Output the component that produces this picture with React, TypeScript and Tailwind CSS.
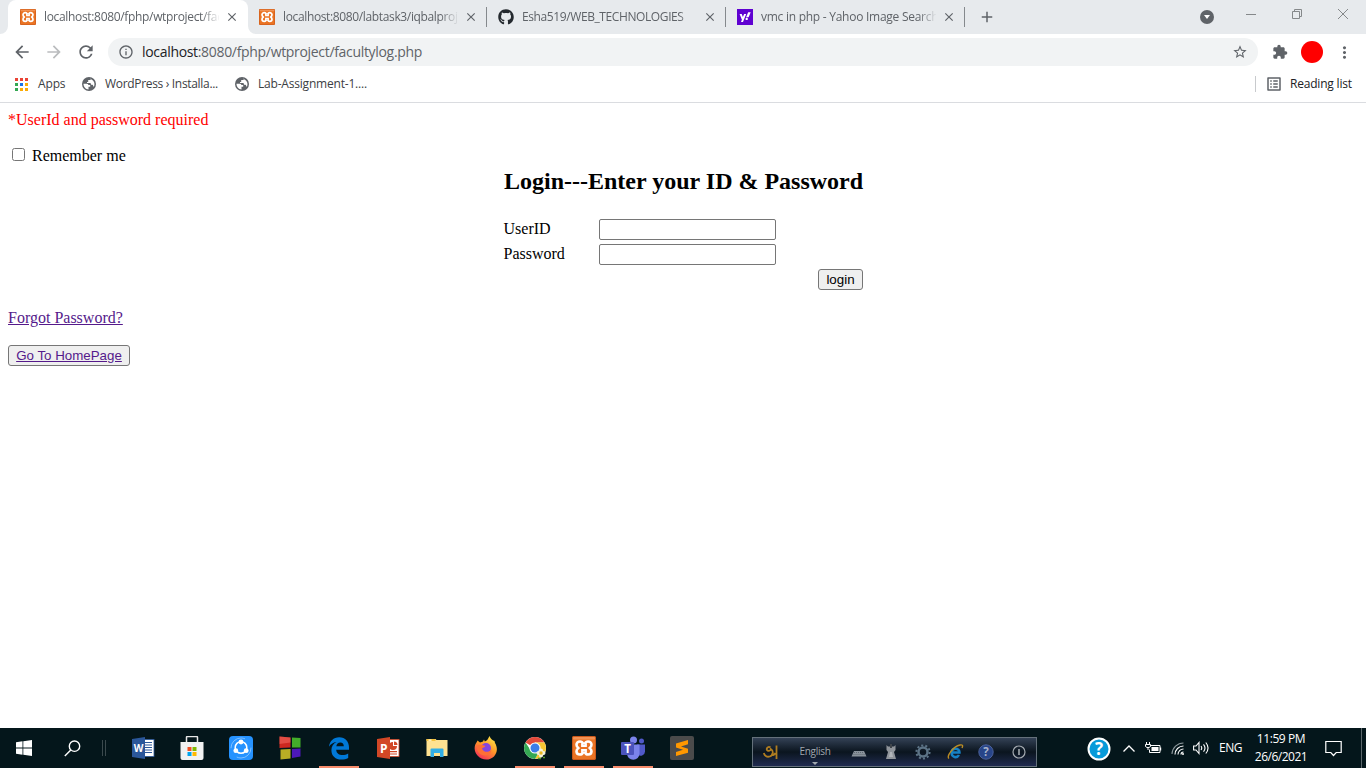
import React from "react";
import {
  MdAdd,
  MdArrowBack,
  MdArrowForward,
  MdClose,
  MdExtension,
  MdInfoOutline,
  MdListAlt,
  MdMoreVert,
  MdRefresh,
  MdStarBorder,
} from "react-icons/md";
import { FaGithub } from "react-icons/fa";

function XamppIcon({ className }: { className: string }) {
  return (
    <svg viewBox="0 0 24 24" className={className}>
      <rect width="24" height="24" rx="2" fill="#ea7424" />
      <rect x="0.5" y="0.5" width="23" height="23" rx="1.500" fill="none" stroke="#c9581a" />
      <rect x="1" y="1" width="22" height="2.500" rx="1" fill="#f3a06a" opacity="0.700" />
      <path
        d="M8 5.500c-2.200 0-3.500 1.300-3.500 3.200 0 1.500.8 2.600 2 3.300-1.200.7-2 1.800-2 3.300 0 1.900 1.300 3.200 3.500 3.200 1.500 0 2.400-.8 2.800-2h2.400c.4 1.200 1.300 2 2.800 2 2.200 0 3.500-1.300 3.500-3.200 0-1.500-.8-2.600-2-3.300 1.200-.7 2-1.800 2-3.300 0-1.900-1.300-3.200-3.500-3.200-1.500 0-2.400.8-2.800 2h-2.400c-.4-1.200-1.300-2-2.800-2z"
        fill="none"
        stroke="#fff"
        strokeWidth="2.600"
        strokeLinejoin="round"
      />
      <path d="M10 7.500v2.500h4V7.500M10 16.500v-2.500h4v2.500" fill="none" stroke="#fff" strokeWidth="1.800" />
    </svg>
  );
}

function YahooIcon() {
  return (
    <svg viewBox="0 0 16 16" className="size-4 shrink-0">
      <rect width="16" height="16" fill="#5f01d1" />
      <path d="M2.600 5h2.100l1.200 3L7.100 5h2.100L6 12.900H4l.9-2.200z" fill="#fff" />
      <path d="M11.200 3.300h2.500l-2.100 5H9.100z" fill="#fff" />
      <circle cx="9.700" cy="9.900" r="1.200" fill="#fff" />
    </svg>
  );
}

function GlobeIcon() {
  return (
    <svg viewBox="0 0 14 14" className="size-3.5 shrink-0">
      <circle cx="7" cy="7" r="7" fill="#5f6368" />
      <path d="M1.500 6.800h3.200q1.500 0 1.800 1.300h1.700v1.700H6.500v2.700C3.800 12.300 1.500 10 1.500 6.800z" fill="#fff" />
      <path d="M8.800 1.800 8.500 3H6.200v2H5v1h3.200q.8 0 .8 1.800h1.400q.8 0 .9 1.700h.7c1.400-3.300-.4-6.600-4.200-7.700z" fill="#fff" />
    </svg>
  );
}

function Tab({
  icon,
  title,
  active,
  tracking,
}: {
  icon: React.ReactNode;
  title: string;
  active?: boolean;
  tracking: string;
}) {
  return (
    <div
      className={
        "relative flex h-[34px] shrink-0 items-center pl-3 " +
        (active ? "mr-[-1px] w-[240px] rounded-t-lg bg-white" : "w-[239px]")
      }
    >
      {icon}
      <span
        className={
          "ml-2 w-[175px] overflow-hidden whitespace-nowrap text-xs text-[#5f6368] [mask-image:linear-gradient(to_right,#000_157px,transparent_176px)] " +
          tracking
        }
      >
        {title}
      </span>
      <MdClose className="ml-[6px] size-3.5 text-[#5f6368]" />
      {active ? (
        <>
          <svg viewBox="0 0 8 8" className="absolute bottom-0 -left-2 size-2">
            <path d="M8 0v8H0a8 8 0 0 0 8-8z" fill="#fff" />
          </svg>
          <svg viewBox="0 0 8 8" className="absolute -right-2 bottom-0 size-2">
            <path d="M0 0v8h8a8 8 0 0 1-8-8z" fill="#fff" />
          </svg>
        </>
      ) : (
        <span className="absolute right-[-1px] top-[7px] h-5 w-px bg-[#85898d]" />
      )}
    </div>
  );
}

function AppsIcon() {
  const colors = ["#ea4335", "#ea4335", "#ea4335", "#34a853", "#1a73e8", "#fbab05", "#34a853", "#fbab05", "#fbab05"];
  return (
    <svg viewBox="0 0 13 13" className="size-[13px]">
      {colors.map((c, i) => (
        <rect key={i} x={(i % 3) * 5} y={Math.floor(i / 3) * 5} width="3" height="3" fill={c} />
      ))}
    </svg>
  );
}

function TaskCell({ children, running }: { children: React.ReactNode; running?: boolean }) {
  return (
    <div className="relative flex h-10 w-[49px] shrink-0 items-center justify-center">
      {children}
      {running && <span className="absolute bottom-0 left-[5px] h-0.5 w-10 bg-[#f78c6c]" />}
    </div>
  );
}

function Taskbar() {
  return (
    <footer className="flex h-10 shrink-0 bg-[#04161b] font-['Open_Sans',sans-serif] text-white">
      <div className="flex h-10 w-12 items-center justify-center">
        <svg viewBox="0 0 16 16" className="size-4" fill="#fff">
          <path d="M0 2.200 6.500 1.300v6.200H0zM7.300 1.200 16 0v7.500H7.300zM0 8.400h6.500v6.300L0 13.800zM7.300 8.400H16V16l-8.700-1.200z" />
        </svg>
      </div>
      <div className="flex h-10 w-12 items-center justify-center">
        <svg viewBox="0 0 17 17" className="size-[17px]" fill="none" stroke="#fff" strokeWidth="1.400">
          <circle cx="10.500" cy="6.200" r="5.200" />
          <path d="M6.800 10 .8 16" />
        </svg>
      </div>
      <div className="flex h-10 w-[22px] items-center gap-0.5 pl-[6px]">
        <span className="h-4 w-px bg-[#3b494d]" />
        <span className="h-4 w-px bg-[#3b494d]" />
      </div>
      <TaskCell>
        <svg viewBox="0 0 24 24" className="size-6">
          <rect x="11" y="3.500" width="12" height="17" fill="#fff" stroke="#2b579a" strokeWidth="0.800" />
          <path d="M14 6.500h7M14 9h7M14 11.500h7M14 14h7M14 16.500h7" stroke="#2b579a" strokeWidth="1.200" />
          <path d="M1 3 14 1v22L1 21z" fill="#2b579a" />
          <text x="2.800" y="16" fill="#fff" fontFamily="Open Sans, sans-serif" fontWeight="bold" fontSize="10">W</text>
        </svg>
      </TaskCell>
      <TaskCell>
        <svg viewBox="0 0 24 24" className="size-6">
          <path d="M6.500 8V1.500q0-1 1-1h9q1 0 1 1V8" fill="none" stroke="#e7e7e7" strokeWidth="1.500" />
          <path d="M.5 6h23v16q0 2-2 2h-19q-2 0-2-2z" fill="#f2f2f2" />
          <path d="M7.500 11H11.500v4h-4z" fill="#f25022" />
          <path d="M12.500 11h4v4h-4z" fill="#7fba00" />
          <path d="M7.500 16h4v4h-4z" fill="#00a4ef" />
          <path d="M12.500 16h4v4h-4z" fill="#ffb900" />
        </svg>
      </TaskCell>
      <TaskCell>
        <svg viewBox="0 0 24 24" className="size-6">
          <rect width="24" height="24" rx="4" fill="#2693ff" />
          <circle cx="12" cy="12" r="10" fill="none" stroke="#7fc0ff" strokeWidth="1" strokeDasharray="20 11" />
          <circle cx="12" cy="11.500" r="5.800" fill="none" stroke="#fff" strokeWidth="1.500" />
          <g fill="#fff">
            <circle cx="12" cy="6" r="2.400" />
            <circle cx="6.800" cy="14.700" r="2.400" />
            <circle cx="17.200" cy="14.700" r="2.400" />
          </g>
        </svg>
      </TaskCell>
      <TaskCell>
        <svg viewBox="0 0 22 24" className="h-6 w-[22px]">
          <path d="M.5.5 11.500 1.500v10L.5 12z" fill="#cc2820" />
          <path d="M13 1.500l8.500.5v9.500H13z" fill="#43ad2a" />
          <path d="M1.500 13.500 11.500 13v9.500l-10 1z" fill="#b9ae25" />
          <path d="M13 13l8.500-.5v8L13 22z" fill="#4d18b7" />
          <path d="M.5.5 11.500 1.500v5L.5 8z" fill="#f67167" opacity="0.500" />
        </svg>
      </TaskCell>
      <TaskCell running>
        <svg viewBox="0 0 22 24" className="h-6 w-[22px]">
          <path
            d="M1 10.800C1.600 5.300 5.500 1.300 11.200 1.300c6.300 0 9.800 4.800 9.800 9.900v2.600H8.200c.2 3.800 3 5.300 6.200 5.300 2.200 0 4-.5 5.800-1.500v4.500c-1.900 1-4.300 1.500-6.800 1.500-5.900 0-10-3.600-10-9.400 0-3.800 1.900-6.800 5.300-8.200C4.900 6.300 2.300 8.500 1 10.800zM8.300 10.300h7.500c0-2.300-1.200-3.800-3.500-3.800-2.200 0-3.700 1.600-4 3.800z"
            fill="#0078d7"
            fillRule="evenodd"
          />
        </svg>
      </TaskCell>
      <TaskCell>
        <svg viewBox="0 0 24 24" className="size-6">
          <rect x="11" y="3.500" width="12" height="17" fill="#fff" stroke="#d24726" strokeWidth="0.800" />
          <path d="M17 6a4 4 0 1 0 4 4h-4z" fill="#d24726" />
          <path d="M18 5.500V9h3.500A3.500 3.500 0 0 0 18 5.500zM14 15h7v1.200h-7zM14 17.500h7v1h-7z" fill="#d24726" />
          <path d="M1 3 14 1v22L1 21z" fill="#d24726" />
          <text x="4" y="16.500" fill="#fff" fontFamily="Open Sans, sans-serif" fontWeight="bold" fontSize="12">P</text>
        </svg>
      </TaskCell>
      <TaskCell>
        <svg viewBox="0 0 22 20" className="h-5 w-[22px]">
          <path d="M.5 1h9l1 1h11v16H.5z" fill="#ffe291" />
          <path d="M.5 1h9v2h-9z" fill="#f5c23c" />
          <path d="M2.500 1.500h3v1.300h-3z" fill="#fff8df" />
          <path d="M4.500 19v-7.500q0-1 1-1h11q1 0 1 1V19H14v-4H8v4z" fill="#32aee5" />
        </svg>
      </TaskCell>
      <TaskCell>
        <svg viewBox="0 0 24 24" className="size-6">
          <defs>
            <linearGradient id="fox" x1="0.8" y1="0" x2="0.2" y2="1">
              <stop offset="0" stopColor="#ffe94b" />
              <stop offset="0.450" stopColor="#ff9a27" />
              <stop offset="1" stopColor="#f5265b" />
            </linearGradient>
          </defs>
          <path d="M3.500 4.500 6 6.500l3-1 1-2 .8 2C13 5 14 3 15.500 0c1 3 3.500 4.500 5 5l.5 2c3 5 2.200 10-1 13.500-4.500 4.500-12.500 4-16.500-1C.5 16 0 12 1.300 8.500 2 7 3 6 3.500 4.500z" fill="url(#fox)" />
          <circle cx="12" cy="12" r="5" fill="#8446df" />
          <path d="M3 9.500c3-1.500 5.500-.5 8.500.5-1 1.500-3 1.500-3.500 2.500 1.500 4 6.500 4.500 9.500 1-.5 4.500-4 7-9 5.500C4.500 18 2.500 14 3 9.500z" fill="#ff6f35" />
        </svg>
      </TaskCell>
      <TaskCell running>
        <svg viewBox="0 0 24 24" className="size-6">
          <circle cx="12" cy="12" r="11" fill="#fff" />
          <path d="M12 12 2.500 6.500A11 11 0 0 1 21.500 6.500H12z" fill="#e24a3b" />
          <path d="M21.500 6.500A11 11 0 0 1 12 23l5-9-5-7.500z" fill="#f8c632" />
          <path d="M2.500 6.500A11 11 0 0 0 12 23l4.500-8-9-1z" fill="#35a853" />
          <circle cx="12" cy="12" r="5.600" fill="#fff" />
          <circle cx="12" cy="12" r="4.500" fill="#3c7de8" />
          <g fill="#f4f1db">
            <circle cx="18" cy="14.500" r="2" />
            <circle cx="20.500" cy="17" r="2" />
            <circle cx="18" cy="19.500" r="2" />
            <circle cx="15.500" cy="17" r="2" />
          </g>
          <circle cx="18" cy="17" r="1.700" fill="#eab61e" />
          <path d="M15 22.500h3M20 21.500h2" stroke="#569a28" strokeWidth="1.500" />
        </svg>
      </TaskCell>
      <TaskCell running>
        <XamppIcon className="size-6" />
      </TaskCell>
      <TaskCell running>
        <svg viewBox="0 0 24 24" className="size-6">
          <circle cx="12.500" cy="4" r="3.500" fill="#7b83eb" />
          <circle cx="20.500" cy="5" r="2.500" fill="#5059c9" />
          <path d="M16 8.500h8v7a4.500 4.500 0 0 1-7 3.500z" fill="#5059c9" />
          <path d="M6 8.500h12.500v9a6 6 0 0 1-12.500 0z" fill="#7b83eb" />
          <rect x="0" y="6" width="13" height="13" rx="1" fill="#4b53bc" />
          <text x="6.500" y="16.500" textAnchor="middle" fill="#fff" fontFamily="Open Sans, sans-serif" fontWeight="bold" fontSize="11.500">T</text>
        </svg>
      </TaskCell>
      <TaskCell>
        <svg viewBox="0 0 24 24" className="size-6">
          <rect width="24" height="24" rx="2" fill="#4b4b4b" />
          <path d="M6 7.500 18 4v4.200l-7 2.200 7 2.300v4L6 20v-4l7-2.200-7-2.300z" fill="#ff9800" />
        </svg>
      </TaskCell>

      <div className="mt-[9px] ml-[46px] flex h-[30px] w-[285px] shrink-0 items-center border border-[#65717b] bg-linear-to-b from-[#344256] via-[#0b151f] via-50% to-[#202b50]">
        <div className="flex w-[34px] justify-center">
          <svg viewBox="0 0 15 15" className="size-[15px]" fill="none" stroke="#b07d20" strokeWidth="1.800">
            <path d="M7.500 2.500c-2-1.500-4.500.5-3.500 2.500 1 1.800 4 .5 3.800-1 3 1.500 2.500 6.500-1 7.500C3.500 12.500 1.500 10.500.8 8M8 9.500c2 1 3.500.5 4.500-1.500M13.500.5v13.500" />
          </svg>
        </div>
        <div className="relative ml-[9px] flex h-7 w-[38px] items-center justify-center text-[10px] leading-none text-[#a2a9b0]">
          <span className="-mt-[3px] tracking-[-0.3px]">English</span>
          <svg viewBox="0 0 6 3" className="absolute bottom-[1px] h-[3px] w-1.5" fill="#a2a9b0">
            <path d="M0 0h6L3 3z" />
          </svg>
        </div>
        <svg viewBox="0 0 16 8" className="mt-1 ml-[17px] h-2 w-4">
          <path d="M3 1h10l2.500 5.500H.5z" fill="#89919a" />
          <path d="M3 2.500h10M2.500 4.500h11" stroke="#5f6870" strokeDasharray="1 1" />
        </svg>
        <svg viewBox="0 0 12 16" className="ml-[18px] h-4 w-3">
          <path d="M1.500 1l1.500 1.500h6L10.500 1v5L9 8l2 7H1l2-7-1.500-2z" fill="#8f949a" />
          <path d="M5 0h2v4H5z" fill="#3f454b" />
          <path d="M5 8h2l1 5H4z" fill="#b1b5b9" />
        </svg>
        <svg viewBox="0 0 16 16" className="ml-[18px] size-4" fill="none" stroke="#5c7386">
          <circle cx="8" cy="8" r="4.500" strokeWidth="2.500" />
          <circle cx="8" cy="8" r="6.600" strokeWidth="2" strokeDasharray="2.100 2.050" />
        </svg>
        <svg viewBox="0 0 17 16" className="ml-4 h-4 w-[17px]">
          <path d="M4.500 8.500h8c.2-5-7.800-5-8 0 .2 5 5.500 6 7.500 2.500" fill="none" stroke="#1681c4" strokeWidth="2.500" />
          <path d="M2 14.500c-3-2 4-12 11-13.500 3-.5 3 1 2 3" fill="none" stroke="#ba8c24" strokeWidth="1.400" />
        </svg>
        <svg viewBox="0 0 16 16" className="ml-[14px] size-4">
          <circle cx="8" cy="8" r="7.200" fill="#284589" stroke="#4c629c" />
          <text x="8" y="12.200" textAnchor="middle" fontFamily="Open Sans, sans-serif" fontWeight="bold" fontSize="11.500" fill="#a9b3c8">?</text>
        </svg>
        <svg viewBox="0 0 14 14" className="ml-[18px] size-3.5" fill="none" stroke="#a4aab0" strokeWidth="1.200">
          <circle cx="7" cy="7" r="6" />
          <path d="M7 4v6" strokeWidth="1.600" />
        </svg>
      </div>

      <div className="ml-[50px] flex h-10 items-center">
        <svg viewBox="0 0 24 24" className="mt-[2px] size-6">
          <circle cx="12" cy="12" r="10.500" fill="#079ad9" stroke="#fff" strokeWidth="2" />
          <text x="12" y="18" textAnchor="middle" fontFamily="Open Sans, sans-serif" fontWeight="bold" fontSize="17" fill="#fff">?</text>
        </svg>
        <svg viewBox="0 0 12 7" className="ml-[12px] h-[7px] w-3" fill="none" stroke="#fff" strokeWidth="1.300">
          <path d="M.5 6.500 6 1l5.500 5.500" />
        </svg>
        <svg viewBox="0 0 17 13" className="ml-[10px] h-[13px] w-[17px]">
          <path d="M5.500 3.500h9.500v7H4.500v-3" fill="none" stroke="#fff" />
          <path d="M6.500 5h7v4h-7zM15 5.500h1.200v3H15z" fill="#fff" />
          <path d="M1.500 0v2M4.500 0v2M.5 2.500h5v2L4 5.500H2L.5 4.500zM3 5.500V8" fill="none" stroke="#fff" />
        </svg>
        <svg viewBox="0 0 14 14" className="mt-0.5 ml-[9px] size-3.5" fill="none" stroke="#fff" strokeWidth="1.100">
          <path d="M1 12A11.500 11.500 0 0 1 12.500 1" stroke="#8b969a" />
          <path d="M4 12.500A8.500 8.500 0 0 1 12.500 4M7 12.500A5.500 5.500 0 0 1 12.500 7M10 12.500A2.500 2.500 0 0 1 12.500 10" />
          <circle cx="12" cy="12" r="1" fill="#fff" stroke="none" />
        </svg>
        <svg viewBox="0 0 17 14" className="ml-[8px] h-3.5 w-[17px]" fill="none" stroke="#fff" strokeWidth="1.100">
          <path d="M.6 5h2.400L6 1.500v11L3 9H.6zM8 5q1.500 2 0 4M10.500 3.300q3 3.700 0 7.400M12.800 1.500q4.500 5.500 0 11" />
        </svg>
        <span className="ml-[9px] w-6 text-xs tracking-[-0.5px]">ENG</span>
        <div className="ml-[10px] flex w-[56px] flex-col items-center text-xs leading-[18px] whitespace-nowrap">
          <span className="tracking-[-0.4px]">11:59 PM</span>
          <span className="tracking-[-0.5px]">26/6/2021</span>
        </div>
        <svg viewBox="0 0 17 17" className="ml-4 size-[17px]" fill="none" stroke="#fff" strokeWidth="1.200">
          <path d="M.8 1.500h15.400v11h-5l-2.700 3-2.700-3h-5z" />
        </svg>
        <span className="ml-[19px] h-10 w-px bg-[#5b676b]" />
      </div>
    </footer>
  );
}

export default function App() {
  return (
    <div className="flex h-[768px] w-[1366px] flex-col overflow-hidden bg-white">
      <header className="shrink-0 border-b border-[#dadce0] font-['Open_Sans',sans-serif]">
        <div className="flex h-[34px] bg-[#e7eaed] pl-2">
          <Tab
            active
            icon={<XamppIcon className="size-4 shrink-0" />}
            title="localhost:8080/fphp/wtproject/facultylog.php"
            tracking="tracking-[-0.33px]"
          />
          <Tab
            icon={<XamppIcon className="size-4 shrink-0" />}
            title="localhost:8080/labtask3/iqbalproject/index.php"
            tracking="tracking-[-0.36px]"
          />
          <Tab
            icon={<FaGithub className="size-4 shrink-0 text-[#24292e]" />}
            title="Esha519/WEB_TECHNOLOGIES"
            tracking="tracking-[-0.4px]"
          />
          <Tab icon={<YahooIcon />} title="vmc in php - Yahoo Image Search Results" tracking="tracking-[-0.26px]" />
          <div className="ml-[14px] flex items-center">
            <MdAdd className="size-[18px] text-[#5f6368]" />
          </div>
          <div className="mr-[18px] ml-auto flex items-start">
            <svg viewBox="0 0 14 14" className="mt-[10px] size-3.5">
              <circle cx="7" cy="7" r="7" fill="#5f6368" />
              <path d="M4 5h6l-3 4z" fill="#fff" />
            </svg>
            <svg viewBox="0 0 10 10" className="mt-[9px] ml-8 size-[10px]" stroke="#85888a">
              <path d="M0 5.500h10" />
            </svg>
            <svg viewBox="0 0 10 10" className="mt-[9px] ml-9 size-[10px]" fill="none" stroke="#85888a">
              <path d="M.5 2.500h7v7h-7zM2.500 2.500v-2h7v7h-2" />
            </svg>
            <svg viewBox="0 0 10 10" className="mt-[9px] ml-9 size-[10px]" stroke="#85888a">
              <path d="M0 0l10 10M10 0 0 10" />
            </svg>
          </div>
        </div>

        <div className="flex h-9 items-center pl-3 text-[#5f6368]">
          <MdArrowBack className="size-5" />
          <MdArrowForward className="ml-3 size-5 text-[#babcbe]" />
          <MdRefresh className="ml-3 size-5" />
          <div className="ml-3 flex h-7 w-[1150px] items-center rounded-full bg-[#f1f3f4] pl-[10px]">
            <MdInfoOutline className="size-4" />
            <span className="ml-2 text-sm tracking-[-0.32px] whitespace-nowrap">
              <span className="text-[#202124]">localhost</span>:8080/fphp/wtproject/facultylog.php
            </span>
            <MdStarBorder className="mr-[10px] ml-auto size-4" />
          </div>
          <MdExtension className="ml-[14px] size-4" />
          <span className="ml-[13px] size-[22px] rounded-full bg-[#ff0000]" />
          <MdMoreVert className="ml-[12px] size-[19px]" />
        </div>

        <div className="flex h-8 items-center pb-1 pl-[15px] text-xs whitespace-nowrap text-[#3c4043]">
          <AppsIcon />
          <span className="ml-[10px] w-[44px] tracking-[-0.15px]">Apps</span>
          <GlobeIcon />
          <span className="ml-[9px] w-[130px] tracking-[-0.32px]">WordPress › Installa...</span>
          <GlobeIcon />
          <span className="ml-[9px] tracking-[-0.2px]">Lab-Assignment-1....</span>
          <span className="ml-auto h-4 w-px bg-[#c8cacd]" />
          <MdListAlt className="ml-[9px] size-[18px] text-[#5f6368]" />
          <span className="ml-[7px] w-[76px] tracking-[-0.2px] text-[#202124]">Reading list</span>
        </div>
      </header>

      <main className="min-h-0 flex-1 px-2 pt-2 font-['Liberation_Serif',serif] text-base leading-[18px] text-black">
        <p className="text-[#ff0000]">*UserId and password required</p>
        <label className="mt-[18px] flex h-[18px] items-center">
          <input
            type="checkbox"
            className="mb-[3px] ml-1 size-[13px] appearance-none rounded-[2.500px] border border-[#767676] bg-white"
          />
          <span className="ml-[7px]">Remember me</span>
        </label>
        <section className="mx-auto mt-[2px] w-[360px]">
          <h2 className="pl-px text-2xl leading-7 font-bold whitespace-nowrap">Login---Enter your ID &amp; Password</h2>
          <div className="mt-6 grid grid-cols-[96px_177px] gap-y-1">
            <label className="h-[21px] pl-[0.500px] leading-5">UserID</label>
            <input type="text" className="h-[21px] w-[177px] rounded-[2px] border border-[#767676] bg-white" />
            <label className="h-[21px] pl-[0.500px] leading-5">Password</label>
            <input type="password" className="h-[21px] w-[177px] rounded-[2px] border border-[#767676] bg-white" />
          </div>
          <div className="mt-1 flex justify-end">
            <button className="h-[21px] w-[45px] rounded-[3px] border border-[#767676] bg-[#efefef] font-['Liberation_Sans',sans-serif] text-[13.333px] leading-[19px]">
              login
            </button>
          </div>
        </section>
        <p className="mt-[19px]">
          <a className="text-[#551a8b] underline">Forgot Password?</a>
        </p>
        <button className="mt-[18px] block h-[21px] w-[122px] rounded-[3px] border border-[#767676] bg-[#efefef] font-['Liberation_Sans',sans-serif] text-[13.333px] leading-[19px] whitespace-nowrap text-[#551a8b] underline">
          Go To HomePage
        </button>
      </main>

      <Taskbar />
    </div>
  );
}
